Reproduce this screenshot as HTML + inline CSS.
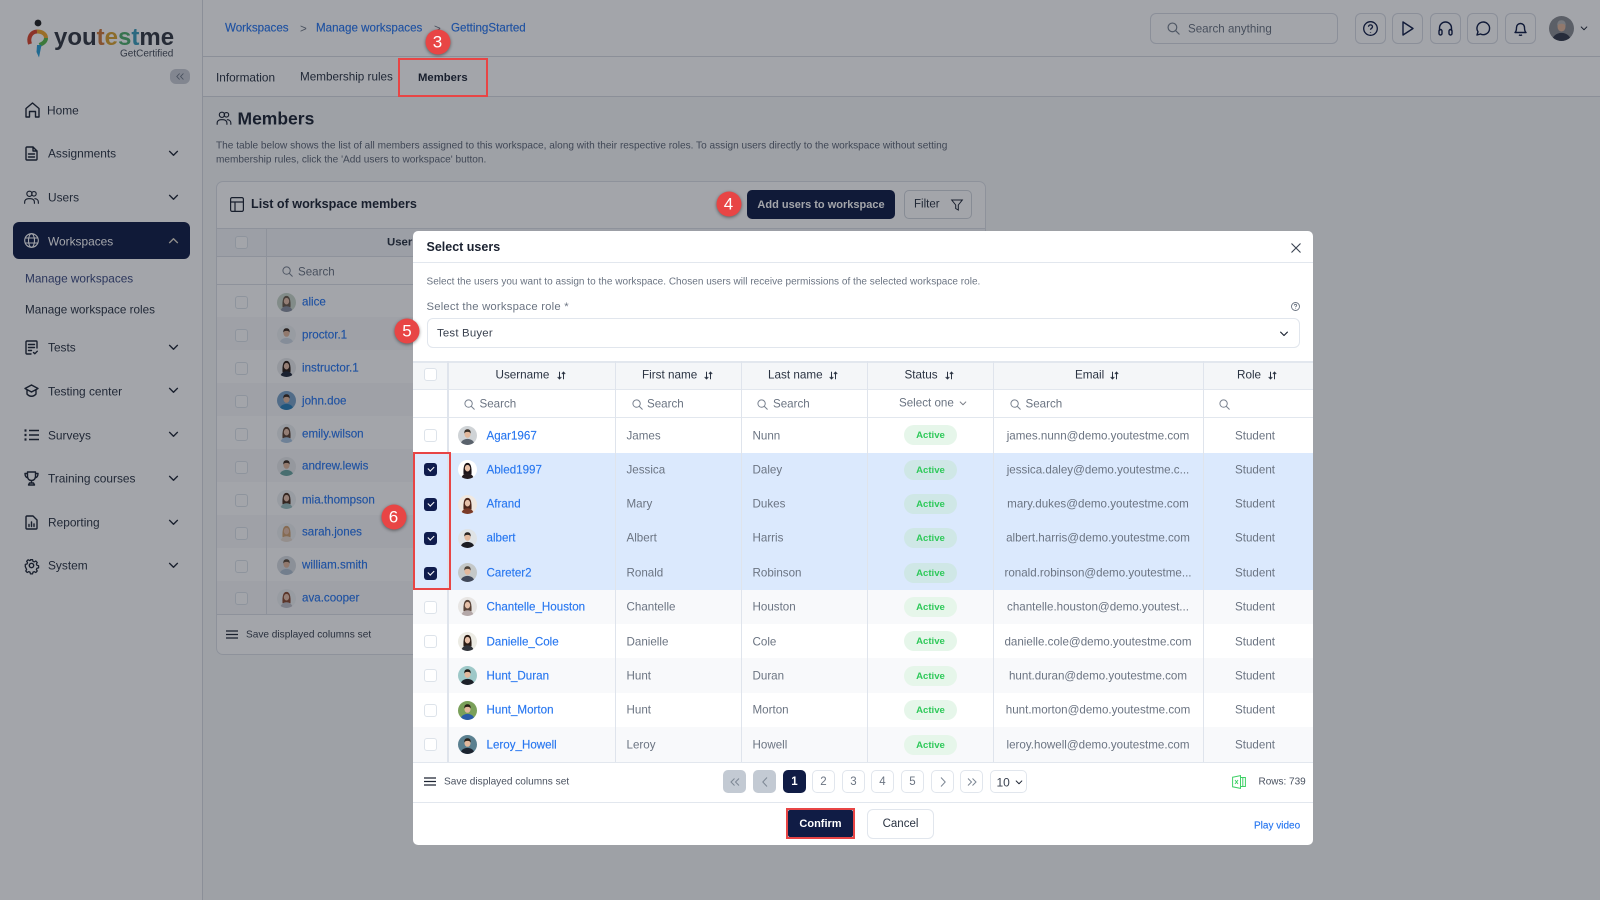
<!DOCTYPE html>
<html lang="en"><head><meta charset="utf-8"><title>Select users</title>
<style>
*{box-sizing:border-box}
html,body{margin:0;padding:0}
body{width:1600px;height:900px;overflow:hidden;position:relative;background:#f7f8f9;font-family:"Liberation Sans",sans-serif;color:#1d2433;font-size:11.6px}
.t{position:absolute;white-space:nowrap;transform:translateY(-46%);line-height:1.2}
.c{transform:translate(-50%,-46%)}
.a{position:absolute}
.l{color:#2877f0;-webkit-text-stroke:.15px #2877f0;font-size:11.6px}
.g{color:#6b7482;font-size:11.6px}
.n{color:#2a3342;font-size:11.9px}
svg{position:absolute;overflow:visible}
.ic{fill:none;stroke:#1d2433;stroke-width:1.4;stroke-linecap:round;stroke-linejoin:round}
.cb{position:absolute;width:13px;height:13px;border:1.3px solid #dde3ea;border-radius:3px;background:#fff}
.ck{position:absolute;width:13px;height:13px;border-radius:3px;background:#0f1c4d}
.ck:after{content:"";position:absolute;left:3.6px;top:2.6px;width:5.4px;height:3.2px;border-left:1.3px solid #fff;border-bottom:1.3px solid #fff;transform:rotate(-45deg)}
.tb{position:absolute;width:31px;height:31px;top:12.5px;border:1px solid #d8dce3;border-radius:6px}
.pg{position:absolute;top:770px;height:23px;width:23px;border:1.2px solid #e1e6ed;border-radius:5px;text-align:center;line-height:22.5px;color:#6b7482;font-size:11.5px;background:#fff}
.bd{position:absolute;left:904px;width:53px;height:20px;border-radius:10px;background:#e6f6ea;color:#2fc95a;font-weight:bold;font-size:9.6px;text-align:center;line-height:21px;transform:translateY(-50%)}
.bd.s{background:#cfe7e6}
.v{position:absolute;top:361px;height:401px;width:1px;background:#dfe4ec}
.h{position:absolute;left:413px;width:900px;height:1.5px;background:#e2e7ee}
.mk{position:absolute;width:25px;height:25px;border-radius:50%;background:#e84545;color:#fff;font-size:17px;text-align:center;line-height:25px;transform:translate(-50%,-50%);box-shadow:0 1px 3px rgba(0,0,0,.45)}
.rr{position:absolute;border:2px solid #e84545}
#ov{position:absolute;left:0;top:0;width:1600px;height:900px;background:rgba(19,24,35,.39)}
#m{position:absolute;left:413px;top:231px;width:900px;height:614px;background:#fff;border-radius:5px}
</style></head><body>
<svg width="0" height="0" style="position:absolute">
<defs>
<clipPath id="cp"><circle cx="10" cy="10" r="10"/></clipPath>
<symbol id="av" viewBox="0 0 20 20"><g clip-path="url(#cp)"><rect width="20" height="20" style="fill:var(--b)"/><ellipse cx="10" cy="20" rx="7.5" ry="6.5" style="fill:var(--c)"/><ellipse cx="10" cy="8.5" rx="3.2" ry="3.9" fill="#e2b89c"/><path d="M6.6 8C6.4 4.4 8 3.4 10 3.4S13.6 4.4 13.4 8C12.6 6.4 11 6.2 10 6.2S7.4 6.4 6.6 8z" style="fill:var(--h)"/></g></symbol>
<symbol id="aw" viewBox="0 0 20 20"><g clip-path="url(#cp)"><rect width="20" height="20" style="fill:var(--b)"/><path d="M5.8 15C5.4 7 6.6 3 10 3s4.6 4 4.2 12z" style="fill:var(--h)"/><ellipse cx="10" cy="20" rx="6.5" ry="6" style="fill:var(--c)"/><ellipse cx="10" cy="8.6" rx="2.8" ry="3.5" fill="#e6c0a8"/></g></symbol>
<symbol id="se" viewBox="0 0 12 12"><circle cx="5" cy="5" r="4" fill="none" stroke="#78818f" stroke-width="1.1"/><path d="M8 8l3.2 3.2" stroke="#78818f" stroke-width="1.1" stroke-linecap="round"/></symbol>
<symbol id="so" viewBox="0 0 9 9"><path d="M2.5 .8v7M.7 6l1.8 1.9L4.3 6M6.5 8.2v-7M4.9 3l1.6-1.9L8.2 3" fill="none" stroke="#2a3342" stroke-width="1"/></symbol>
<symbol id="ch" viewBox="0 0 12 8"><path d="M1.5 1.5L6 6l4.5-4.5" fill="none" stroke="#1d2433" stroke-width="1.6" stroke-linecap="round" stroke-linejoin="round"/></symbol>
<symbol id="us" viewBox="0 0 16 16"><circle cx="5.8" cy="4" r="2.8" fill="none" stroke="#1d2433" stroke-width="1.2"/><circle cx="10.6" cy="4" r="2.4" fill="none" stroke="#1d2433" stroke-width="1.2"/><path d="M.7 14.2v-1.4c0-2.2 1.8-3.6 4-3.6h2.4c2.2 0 4 1.4 4 3.6v1.4M11.6 9.3c2 .1 3.7 1.4 3.7 3.5v1.4" fill="none" stroke="#1d2433" stroke-width="1.2" stroke-linecap="round"/></symbol>
</defs></svg>

<!-- sidebar -->
<div class="a" style="left:0;top:0;width:203px;height:900px;background:#fff;border-right:1.5px solid #d8dce2"></div>
<svg style="left:27px;top:19px" width="22" height="40" viewBox="0 0 22 40" fill="none">
<circle cx="11" cy="4" r="3.4" fill="#222"/>
<path d="M3 25C1 19 3.500 13 10 12.500" stroke="#d9452b" stroke-width="4"/>
<path d="M10 12.500C15 12.400 19 15 19 19" stroke="#f0a52b" stroke-width="4"/>
<path d="M19 19C19 23 15 25 12.500 26" stroke="#57b84a" stroke-width="4"/>
<path d="M10 26h4.500L12 38.500 9.500 33z" fill="#2a9fd6"/>
</svg>
<div class="t" style="left:54px;top:37px;font-size:24px;font-weight:bold;color:#333842">you<span style="color:#cf7a3a">t</span><span style="color:#d9a32e">e</span><span style="color:#4fae6b">s</span><span style="color:#3b9dbb">t</span>me</div>
<div class="t" style="left:120px;top:53.500px;font-size:10px;color:#444b57">GetCertified</div>
<div class="a" style="left:170px;top:69px;width:20px;height:15px;background:#c9cdd5;border-radius:6px"></div>
<svg style="left:176px;top:73px" width="8" height="7" viewBox="0 0 8 7"><path d="M3.600 .5L.8 3.500l2.800 3M7.400 .5L4.600 3.500l2.800 3" fill="none" stroke="#6b7482" stroke-width=".9"/></svg>

<svg class="ic" style="left:25px;top:102px" width="15" height="16" viewBox="0 0 15 16"><path d="M1 6.500L7.500 1 14 6.500V15h-3.500V9.500h-6V15H1z"/></svg>
<div class="t n" style="left:47px;top:110px">Home</div>
<svg class="ic" style="left:25px;top:146px" width="13" height="15" viewBox="0 0 13 15"><path d="M1 2a1 1 0 0 1 1-1h6l4 4v8a1 1 0 0 1-1 1H2a1 1 0 0 1-1-1zM8 1v4h4M3.500 8h6M3.500 11h6"/></svg>
<div class="t n" style="left:48px;top:153px">Assignments</div>
<svg style="left:24px;top:190px" width="15" height="15"><use href="#us"/></svg>
<div class="t n" style="left:48px;top:197px">Users</div>
<div class="a" style="left:12.500px;top:222px;width:177px;height:37px;background:#101c45;border-radius:6px"></div>
<svg style="left:24px;top:233px" width="15" height="15" viewBox="0 0 15 15" fill="none" stroke="#fff" stroke-width="1.1"><circle cx="7.500" cy="7.500" r="6.800"/><ellipse cx="7.500" cy="7.500" rx="3" ry="6.800"/><path d="M1.200 5h12.600M1.200 10h12.600"/></svg>
<div class="t n" style="left:48px;top:241px;color:#fff">Workspaces</div>
<div class="t" style="left:25px;top:278px;color:#3c4a80;font-size:11.800px">Manage workspaces</div>
<div class="t n" style="left:25px;top:310px;font-size:11.700px">Manage workspace roles</div>
<svg class="ic" style="left:25px;top:340px" width="13" height="15" viewBox="0 0 13 15"><path d="M12 8V2a1 1 0 0 0-1-1H2a1 1 0 0 0-1 1v11a1 1 0 0 0 1 1h4M3.500 4.500h6M3.500 7.500h6M3.500 10.500h3M8.500 12.500l1.300 1.300 2.500-2.600"/></svg>
<div class="t n" style="left:48px;top:347px">Tests</div>
<svg class="ic" style="left:24px;top:384px" width="15" height="14" viewBox="0 0 15 14"><path d="M1 4.500L7.500 1 14 4.500 7.500 8zM3 6v4c2.500 3 6.500 3 9 0V6"/></svg>
<div class="t n" style="left:48px;top:391px">Testing center</div>
<svg style="left:24px;top:429px" width="15" height="12" viewBox="0 0 15 12" fill="none" stroke="#1d2433" stroke-width="1.4"><path d="M5 1.500h10M5 6h10M5 10.500h10"/><path d="M.5 1.500h2M.5 6h2M.5 10.500h2" stroke-width="2.200"/></svg>
<div class="t n" style="left:48px;top:435px">Surveys</div>
<svg class="ic" style="left:24px;top:471px" width="15" height="15" viewBox="0 0 15 15"><path d="M3.500 1h8v4.500c0 2.500-1.800 4-4 4s-4-1.500-4-4zM3.500 2.500H1c0 3 1 4 3 4.500M11.500 2.500H14c0 3-1 4-3 4.500M7.500 9.500V12M4.500 14h6l-1-2h-4z"/></svg>
<div class="t n" style="left:48px;top:478px">Training courses</div>
<svg class="ic" style="left:25px;top:515px" width="13" height="15" viewBox="0 0 13 15"><path d="M1 2a1 1 0 0 1 1-1h6l4 4v8a1 1 0 0 1-1 1H2a1 1 0 0 1-1-1zM4 11.500V9.500M6.500 11.500V7M9 11.500V9"/></svg>
<div class="t n" style="left:48px;top:522px">Reporting</div>
<svg class="ic" style="left:24px;top:558px" width="15" height="15" viewBox="0 0 15 15"><circle cx="7.500" cy="7.500" r="2.200"/><path d="M6.300 1h2.400l.4 1.800 1.500.7 1.600-1 1.700 1.700-1 1.600.7 1.500 1.800.4v2.400l-1.800.4-.7 1.500 1 1.600-1.700 1.700-1.600-1-1.500.7-.4 1.800H6.300l-.4-1.800-1.500-.7-1.600 1-1.700-1.700 1-1.600-.7-1.500L.6 8.700V6.300l1.800-.4.700-1.500-1-1.600 1.700-1.700 1.600 1 1.500-.7z" transform="translate(.75 .75) scale(.9)"/></svg>
<div class="t n" style="left:48px;top:565px">System</div>
<svg style="left:168px;top:150px" width="11" height="7"><use href="#ch"/></svg>
<svg style="left:168px;top:194px" width="11" height="7"><use href="#ch"/></svg>
<svg style="left:168px;top:237px;transform:rotate(180deg)" width="11" height="7"><use href="#ch" style="filter:invert(1)"/></svg>
<svg style="left:168px;top:344px" width="11" height="7"><use href="#ch"/></svg>
<svg style="left:168px;top:387px" width="11" height="7"><use href="#ch"/></svg>
<svg style="left:168px;top:431px" width="11" height="7"><use href="#ch"/></svg>
<svg style="left:168px;top:475px" width="11" height="7"><use href="#ch"/></svg>
<svg style="left:168px;top:519px" width="11" height="7"><use href="#ch"/></svg>
<svg style="left:168px;top:562px" width="11" height="7"><use href="#ch"/></svg>

<!-- top bar -->
<div class="a" style="left:203px;top:0;width:1397px;height:57px;background:#fff;border-bottom:1.5px solid #d8dce2"></div>
<div class="t l" style="left:225px;top:28px">Workspaces</div>
<div class="t g" style="left:300px;top:29px">&gt;</div>
<div class="t l" style="left:316px;top:28px">Manage workspaces</div>
<div class="t g" style="left:434px;top:29px">&gt;</div>
<div class="t l" style="left:451px;top:28px">GettingStarted</div>
<div class="a" style="left:1150px;top:12.500px;width:187.500px;height:31px;border:1px solid #d8dce3;border-radius:6px"></div>
<svg style="left:1167px;top:22px" width="13" height="13"><use href="#se"/></svg>
<div class="t g" style="left:1188px;top:28.500px">Search anything</div>
<div class="tb" style="left:1355px"></div><div class="tb" style="left:1392px"></div><div class="tb" style="left:1430px"></div><div class="tb" style="left:1467px"></div><div class="tb" style="left:1505px"></div>
<svg style="left:1363px;top:21px" width="15" height="15" viewBox="0 0 15 15" fill="none" stroke="#101c45" stroke-width="1.300"><circle cx="7.500" cy="7.500" r="6.800"/><path d="M5.500 5.800c0-2.600 4-2.600 4 0 0 1.500-2 1.500-2 3M7.500 11v.6"/></svg>
<svg style="left:1402px;top:21px" width="12" height="15" viewBox="0 0 12 15" fill="none" stroke="#101c45" stroke-width="1.400" stroke-linejoin="round"><path d="M1 1l10 6.500L1 14z"/></svg>
<svg style="left:1438px;top:21px" width="15" height="15" viewBox="0 0 15 15" fill="none" stroke="#101c45" stroke-width="1.400"><path d="M1.500 10V7a6 6 0 0 1 12 0v3"/><rect x="1" y="8.500" width="3" height="5.500" rx="1.500"/><rect x="11" y="8.500" width="3" height="5.500" rx="1.500"/></svg>
<svg style="left:1476px;top:21px" width="15" height="15" viewBox="0 0 15 15" fill="none" stroke="#101c45" stroke-width="1.400" stroke-linejoin="round"><path d="M1 14l1-3.200A6.300 6.300 0 1 1 4.500 13z"/></svg>
<svg style="left:1514px;top:21px" width="13" height="15" viewBox="0 0 13 15" fill="none" stroke="#101c45" stroke-width="1.400" stroke-linejoin="round"><path d="M1 11.500c1.200-1 1.500-2.500 1.500-5a4 4 0 0 1 8 0c0 2.500.3 4 1.500 5zM5 13.800c.8.600 2.200.6 3 0"/></svg>
<svg style="left:1548.500px;top:15.500px;--b:#8a8d92;--c:#333a4a;--h:#b8b8b8" width="25" height="25"><use href="#av"/></svg>
<svg style="left:1580px;top:26px" width="8" height="5"><use href="#ch"/></svg>

<!-- tabs -->
<div class="a" style="left:203px;top:57px;width:1397px;height:39.500px;background:#fff;border-bottom:1.5px solid #d8dce2"></div>
<div class="t n" style="left:216px;top:77px;font-size:11.800px">Information</div>
<div class="t n" style="left:300px;top:77px;font-size:11.700px">Membership rules</div>
<div class="t" style="left:418px;top:77.500px;font-weight:bold;font-size:11.300px">Members</div>

<!-- content -->
<svg style="left:216px;top:111px" width="16" height="15"><use href="#us"/></svg>
<div class="t" style="left:237.500px;top:117.500px;font-size:17.500px;font-weight:bold">Members</div>
<div class="t" style="left:216px;top:146px;font-size:10.100px;color:#5d6675">The table below shows the list of all members assigned to this workspace, along with their respective roles. To assign users directly to the workspace without setting</div>
<div class="t" style="left:216px;top:160px;font-size:10.100px;color:#5d6675">membership rules, click the 'Add users to workspace' button.</div>
<div class="a" style="left:216px;top:181px;width:770px;height:474px;background:#fff;border:1px solid #dde1e7;border-radius:7px"></div>
<svg style="left:230px;top:197px" width="14" height="15" viewBox="0 0 14 15" fill="none" stroke="#1d2433" stroke-width="1.200"><rect x=".6" y=".6" width="12.800" height="13.800" rx="1.500"/><path d="M.6 5h12.800M5 5v9.400"/></svg>
<div class="t" style="left:251px;top:204px;font-size:12.600px;font-weight:bold">List of workspace members</div>
<div class="a" style="left:747px;top:190px;width:148px;height:29px;background:#101c45;border-radius:5px;color:#fff;font-size:11px;font-weight:bold;text-align:center;line-height:30px">Add users to workspace</div>
<div class="a" style="left:904px;top:190px;width:68px;height:29px;border:1px solid #d2d6dd;border-radius:5px"></div>
<div class="t n" style="left:914px;top:205px;font-size:11.500px">Filter</div>
<svg style="left:951px;top:199px" width="12" height="12" viewBox="0 0 12 12" fill="none" stroke="#1d2433" stroke-width="1"><path d="M.7 1h10.600L7.300 6v5L4.700 9.500V6z"/></svg>
<div class="a" style="left:217px;top:228px;width:768px;height:29px;background:#f4f6f8;border-top:1px solid #dde1e7;border-bottom:1px solid #dde1e7"></div>
<div class="a" style="left:217px;top:283.500px;width:768px;height:1px;background:#dde1e7"></div>
<div class="a" style="left:217px;top:614px;width:768px;height:1px;background:#dde1e7"></div>
<div class="a" style="left:217px;top:317px;width:768px;height:33px;background:#f8f9fb"></div>
<div class="a" style="left:217px;top:383px;width:768px;height:33px;background:#f8f9fb"></div>
<div class="a" style="left:217px;top:449px;width:768px;height:33px;background:#f8f9fb"></div>
<div class="a" style="left:217px;top:515px;width:768px;height:33px;background:#f8f9fb"></div>
<div class="a" style="left:217px;top:581px;width:768px;height:33px;background:#f8f9fb"></div>
<div class="a" style="left:266px;top:228px;width:1px;height:386px;background:#dde1e7"></div>
<div class="t" style="left:387px;top:242.500px;font-weight:bold;font-size:11.400px;color:#2a3342">Username</div>
<div class="cb" style="left:235px;top:236px"></div>
<svg style="left:282px;top:266px" width="11" height="11"><use href="#se"/></svg>
<div class="t g" style="left:298px;top:271.500px">Search</div>
<div class="cb" style="left:235px;top:296px"></div>
<div class="cb" style="left:235px;top:329px"></div>
<div class="cb" style="left:235px;top:362px"></div>
<div class="cb" style="left:235px;top:395px"></div>
<div class="cb" style="left:235px;top:428px"></div>
<div class="cb" style="left:235px;top:461px"></div>
<div class="cb" style="left:235px;top:494px"></div>
<div class="cb" style="left:235px;top:527px"></div>
<div class="cb" style="left:235px;top:560px"></div>
<div class="cb" style="left:235px;top:592px"></div>
<svg style="left:277px;top:292.500px;--b:#c9d7c9;--c:#8a90a0;--h:#6a5a4a" width="19" height="19"><use href="#aw"/></svg>
<svg style="left:277px;top:325px;--b:#eef0f2;--c:#cfd8e4;--h:#3a2a20" width="19" height="19"><use href="#av"/></svg>
<svg style="left:277px;top:358px;--b:#e8eaec;--c:#222a3a;--h:#2a1c14" width="19" height="19"><use href="#aw"/></svg>
<svg style="left:277px;top:391px;--b:#7aa2c8;--c:#2a7fb8;--h:#3a2a20" width="19" height="19"><use href="#av"/></svg>
<svg style="left:277px;top:424px;--b:#eef0f2;--c:#a8c4e0;--h:#5a4030" width="19" height="19"><use href="#aw"/></svg>
<svg style="left:277px;top:457px;--b:#e8eaec;--c:#6aa6a0;--h:#3a2a20" width="19" height="19"><use href="#av"/></svg>
<svg style="left:277px;top:490px;--b:#eef0f2;--c:#9ac0c0;--h:#4a3020" width="19" height="19"><use href="#aw"/></svg>
<svg style="left:277px;top:523px;--b:#eef0f2;--c:#e8dcd0;--h:#d0a070" width="19" height="19"><use href="#aw"/></svg>
<svg style="left:277px;top:556px;--b:#d8dde2;--c:#b0c0d0;--h:#5a4a3a" width="19" height="19"><use href="#av"/></svg>
<svg style="left:277px;top:589px;--b:#eef0f2;--c:#c0c0c8;--h:#8a4a30" width="19" height="19"><use href="#aw"/></svg>
<div class="t l" style="left:302px;top:302px">alice</div>
<div class="t l" style="left:302px;top:334.500px">proctor.1</div>
<div class="t l" style="left:302px;top:367.500px">instructor.1</div>
<div class="t l" style="left:302px;top:400.500px">john.doe</div>
<div class="t l" style="left:302px;top:433.500px">emily.wilson</div>
<div class="t l" style="left:302px;top:466px">andrew.lewis</div>
<div class="t l" style="left:302px;top:499.500px">mia.thompson</div>
<div class="t l" style="left:302px;top:532px">sarah.jones</div>
<div class="t l" style="left:302px;top:565px">william.smith</div>
<div class="t l" style="left:302px;top:598px">ava.cooper</div>
<svg style="left:226px;top:630px" width="12" height="9" viewBox="0 0 12 9" stroke="#1d2433" stroke-width="1.200"><path d="M0 1h12M0 4.500h12M0 8h12"/></svg>
<div class="t" style="left:246px;top:635px;font-size:10.100px;color:#3a4250">Save displayed columns set</div>

<div id="ov"></div>

<!-- modal -->
<div id="m"></div>
<div class="t" style="left:426.500px;top:246.500px;font-size:12.500px;font-weight:bold;color:#1a2130">Select users</div>
<svg style="left:1291px;top:243px" width="10" height="10" viewBox="0 0 10 10" stroke="#3a4250" stroke-width="1.100"><path d="M.5.5l9 9M9.500.5l-9 9"/></svg>
<div class="h" style="top:261.500px"></div>
<div class="t g" style="left:426.500px;top:282px;font-size:10px;letter-spacing:.02px">Select the users you want to assign to the workspace. Chosen users will receive permissions of the selected workspace role.</div>
<div class="t g" style="left:426.500px;top:307px;font-size:11.300px;letter-spacing:.2px">Select the workspace role *</div>
<svg style="left:1290.500px;top:302px" width="9" height="9" viewBox="0 0 9 9" fill="none" stroke="#6b7482" stroke-width=".9"><circle cx="4.500" cy="4.500" r="4"/><path d="M3.300 3.500c0-1.500 2.400-1.500 2.400 0 0 .9-1.200.9-1.200 1.800M4.500 6.300v.4"/></svg>
<div class="a" style="left:427px;top:318px;width:873px;height:30px;border:1.300px solid #e1e6ed;border-radius:6px"></div>
<div class="t" style="left:437px;top:334px;font-size:11.400px;color:#3a4250;letter-spacing:.2px">Test Buyer</div>
<svg style="left:1279px;top:331px" width="10" height="6"><use href="#ch"/></svg>

<!-- table bg -->
<div class="a" style="left:413px;top:361px;width:900px;height:28px;background:#f4f6f8"></div>
<div class="a" style="left:413px;top:453px;width:900px;height:136.500px;background:#dbe9fd"></div>
<div class="a" style="left:413px;top:589.500px;width:900px;height:34px;background:#f8f9fb"></div>
<div class="a" style="left:413px;top:658px;width:900px;height:34.500px;background:#f8f9fb"></div>
<div class="a" style="left:413px;top:727px;width:900px;height:35px;background:#f8f9fb"></div>
<div class="h" style="top:361px"></div><div class="h" style="top:388.500px"></div><div class="h" style="top:416.500px"></div><div class="h" style="top:761.500px"></div><div class="h" style="top:801.500px"></div>
<div class="v" style="left:447px;width:2px"></div><div class="v" style="left:615px"></div><div class="v" style="left:741px"></div><div class="v" style="left:867px"></div><div class="v" style="left:993px"></div><div class="v" style="left:1203px"></div>

<!-- header -->
<div class="cb" style="left:424px;top:368px"></div>
<div class="t n" style="left:495.500px;top:375px;font-size:11.700px">Username</div>
<div class="t n" style="left:642px;top:375px;font-size:11.700px">First name</div>
<div class="t n" style="left:768px;top:375px;font-size:11.700px">Last name</div>
<div class="t n" style="left:904.500px;top:375px;font-size:11.700px">Status</div>
<div class="t n" style="left:1075px;top:375px;font-size:11.700px">Email</div>
<div class="t n" style="left:1237px;top:375px;font-size:11.700px">Role</div>
<svg style="left:557px;top:371px" width="9" height="9"><use href="#so"/></svg>
<svg style="left:704px;top:371px" width="9" height="9"><use href="#so"/></svg>
<svg style="left:829px;top:371px" width="9" height="9"><use href="#so"/></svg>
<svg style="left:945px;top:371px" width="9" height="9"><use href="#so"/></svg>
<svg style="left:1110px;top:371px" width="9" height="9"><use href="#so"/></svg>
<svg style="left:1268px;top:371px" width="9" height="9"><use href="#so"/></svg>
<!-- filter -->
<svg style="left:464px;top:398.500px" width="11" height="11"><use href="#se"/></svg><div class="t g" style="left:479.500px;top:404px">Search</div>
<svg style="left:631.500px;top:398.500px" width="11" height="11"><use href="#se"/></svg><div class="t g" style="left:647px;top:404px">Search</div>
<svg style="left:757px;top:398.500px" width="11" height="11"><use href="#se"/></svg><div class="t g" style="left:773px;top:404px">Search</div>
<div class="t g" style="left:899px;top:403px">Select one</div>
<svg style="left:959px;top:401px;opacity:.6" width="8" height="5"><use href="#ch"/></svg>
<svg style="left:1010px;top:398.500px" width="11" height="11"><use href="#se"/></svg><div class="t g" style="left:1025.500px;top:404px">Search</div>
<svg style="left:1219px;top:398.500px" width="11" height="11"><use href="#se"/></svg>

<!-- rows -->
<div class="cb" style="left:424px;top:429px"></div>
<svg style="left:458px;top:425.500px;--b:#cfd3d6;--c:#5a626c;--h:#3a3028" width="19" height="19"><use href="#av"/></svg>
<div class="t l" style="left:486.500px;top:435.500px">Agar1967</div><div class="t g" style="left:626.500px;top:435.500px">James</div><div class="t g" style="left:752.500px;top:435.500px">Nunn</div><div class="bd" style="top:435px">Active</div><div class="t g c" style="left:1098px;top:435.500px">james.nunn@demo.youtestme.com</div><div class="t g c" style="left:1255px;top:435.500px">Student</div>

<div class="ck" style="left:424px;top:463px"></div>
<svg style="left:458px;top:460px;--b:#ffffff;--c:#241c20;--h:#1c1418" width="19" height="19"><use href="#aw"/></svg>
<div class="t l" style="left:486.500px;top:469.500px">Abled1997</div><div class="t g" style="left:626.500px;top:469.500px">Jessica</div><div class="t g" style="left:752.500px;top:469.500px">Daley</div><div class="bd s" style="top:469.500px">Active</div><div class="t g c" style="left:1098px;top:469.500px">jessica.daley@demo.youtestme.c...</div><div class="t g c" style="left:1255px;top:469.500px">Student</div>

<div class="ck" style="left:424px;top:498px"></div>
<svg style="left:458px;top:494.500px;--b:#f0e8e0;--c:#7a3a28;--h:#4a2418" width="19" height="19"><use href="#aw"/></svg>
<div class="t l" style="left:486.500px;top:504px">Afrand</div><div class="t g" style="left:626.500px;top:503.500px">Mary</div><div class="t g" style="left:752.500px;top:503.500px">Dukes</div><div class="bd s" style="top:503.500px">Active</div><div class="t g c" style="left:1098px;top:503.500px">mary.dukes@demo.youtestme.com</div><div class="t g c" style="left:1255px;top:503.500px">Student</div>

<div class="ck" style="left:424px;top:532px"></div>
<svg style="left:458px;top:528.500px;--b:#dfe3e6;--c:#1c1c22;--h:#2a2420" width="19" height="19"><use href="#av"/></svg>
<div class="t l" style="left:486.500px;top:538px">albert</div><div class="t g" style="left:626.500px;top:538px">Albert</div><div class="t g" style="left:752.500px;top:538px">Harris</div><div class="bd s" style="top:538px">Active</div><div class="t g c" style="left:1098px;top:538px">albert.harris@demo.youtestme.com</div><div class="t g c" style="left:1255px;top:538px">Student</div>

<div class="ck" style="left:424px;top:567px"></div>
<svg style="left:458px;top:563px;--b:#c4c8c8;--c:#40485a;--h:#4a4038" width="19" height="19"><use href="#av"/></svg>
<div class="t l" style="left:486.500px;top:572.500px">Careter2</div><div class="t g" style="left:626.500px;top:572.500px">Ronald</div><div class="t g" style="left:752.500px;top:572.500px">Robinson</div><div class="bd s" style="top:572.500px">Active</div><div class="t g c" style="left:1098px;top:572.500px">ronald.robinson@demo.youtestme...</div><div class="t g c" style="left:1255px;top:572.500px">Student</div>

<div class="cb" style="left:424px;top:600.500px"></div>
<svg style="left:458px;top:597px;--b:#e8e6e4;--c:#b4a8a8;--h:#5a4438" width="19" height="19"><use href="#aw"/></svg>
<div class="t l" style="left:486.500px;top:607px">Chantelle_Houston</div><div class="t g" style="left:626.500px;top:607px">Chantelle</div><div class="t g" style="left:752.500px;top:607px">Houston</div><div class="bd" style="top:607px">Active</div><div class="t g c" style="left:1098px;top:607px">chantelle.houston@demo.youtest...</div><div class="t g c" style="left:1255px;top:607px">Student</div>

<div class="cb" style="left:424px;top:635px"></div>
<svg style="left:458px;top:631.500px;--b:#ecebe4;--c:#30343a;--h:#2a1c14" width="19" height="19"><use href="#aw"/></svg>
<div class="t l" style="left:486.500px;top:641.500px">Danielle_Cole</div><div class="t g" style="left:626.500px;top:641.500px">Danielle</div><div class="t g" style="left:752.500px;top:641.500px">Cole</div><div class="bd" style="top:641px">Active</div><div class="t g c" style="left:1098px;top:641.500px">danielle.cole@demo.youtestme.com</div><div class="t g c" style="left:1255px;top:641.500px">Student</div>

<div class="cb" style="left:424px;top:669px"></div>
<svg style="left:458px;top:666px;--b:#9dc8c8;--c:#1c2028;--h:#1c1814" width="19" height="19"><use href="#av"/></svg>
<div class="t l" style="left:486.500px;top:675.500px">Hunt_Duran</div><div class="t g" style="left:626.500px;top:675.500px">Hunt</div><div class="t g" style="left:752.500px;top:675.500px">Duran</div><div class="bd" style="top:675.500px">Active</div><div class="t g c" style="left:1098px;top:675.500px">hunt.duran@demo.youtestme.com</div><div class="t g c" style="left:1255px;top:675.500px">Student</div>

<div class="cb" style="left:424px;top:704px"></div>
<svg style="left:458px;top:700.500px;--b:#7aa05a;--c:#2a5ca8;--h:#2a2018" width="19" height="19"><use href="#av"/></svg>
<div class="t l" style="left:486.500px;top:710px">Hunt_Morton</div><div class="t g" style="left:626.500px;top:710px">Hunt</div><div class="t g" style="left:752.500px;top:710px">Morton</div><div class="bd" style="top:710px">Active</div><div class="t g c" style="left:1098px;top:710px">hunt.morton@demo.youtestme.com</div><div class="t g c" style="left:1255px;top:710px">Student</div>

<div class="cb" style="left:424px;top:738px"></div>
<svg style="left:458px;top:735px;--b:#5a8090;--c:#1c2430;--h:#2a2018" width="19" height="19"><use href="#av"/></svg>
<div class="t l" style="left:486.500px;top:744.500px">Leroy_Howell</div><div class="t g" style="left:626.500px;top:744.500px">Leroy</div><div class="t g" style="left:752.500px;top:744.500px">Howell</div><div class="bd" style="top:744.500px">Active</div><div class="t g c" style="left:1098px;top:744.500px">leroy.howell@demo.youtestme.com</div><div class="t g c" style="left:1255px;top:744.500px">Student</div>

<!-- footer -->
<svg style="left:423.500px;top:777px" width="12" height="9" viewBox="0 0 12 9" stroke="#1d2433" stroke-width="1.200"><path d="M0 1h12M0 4.500h12M0 8h12"/></svg>
<div class="t" style="left:444px;top:782px;font-size:10.100px;color:#4a5260">Save displayed columns set</div>
<div class="pg" style="left:723px;background:#c3cad3;border-color:#c3cad3"></div>
<svg style="left:729.500px;top:777.500px" width="10" height="8" viewBox="0 0 10 8" fill="none" stroke="#7d8794"><path d="M4.500.5L1 4l3.500 3.500M9 .5L5.500 4 9 7.500"/></svg>
<div class="pg" style="left:753px;background:#c3cad3;border-color:#c3cad3"></div>
<svg style="left:761.500px;top:776.500px" width="6" height="10" viewBox="0 0 6 10" fill="none" stroke="#7d8794"><path d="M5 .5L.8 5 5 9.500"/></svg>
<div class="pg" style="left:783px;background:#101c45;border-color:#101c45;color:#fff;font-weight:bold">1</div>
<div class="pg" style="left:812px">2</div><div class="pg" style="left:842px">3</div><div class="pg" style="left:871px">4</div><div class="pg" style="left:901px">5</div>
<div class="pg" style="left:931px"></div>
<svg style="left:939.500px;top:776.500px" width="6" height="10" viewBox="0 0 6 10" fill="none" stroke="#7d8794"><path d="M1 .5L5.200 5 1 9.500"/></svg>
<div class="pg" style="left:960px"></div>
<svg style="left:967px;top:777.500px" width="10" height="8" viewBox="0 0 10 8" fill="none" stroke="#7d8794"><path d="M1 .5L4.500 4 1 7.500M5.500 .5L9 4 5.500 7.500"/></svg>
<div class="a" style="left:990px;top:770px;width:37px;height:23px;border:1.200px solid #e1e6ed;border-radius:5px"></div>
<div class="t" style="left:996.500px;top:782px;font-size:12px;color:#3a4250">10</div>
<svg style="left:1014.500px;top:779.500px" width="8" height="5"><use href="#ch"/></svg>
<svg style="left:1231.500px;top:775px" width="14" height="14" viewBox="0 0 14 14" fill="none" stroke="#3fd066" stroke-width="1"><path d="M.6 2.200L8.500.6v12.800L.6 11.800zM8.500 2.500h4.900v9H8.500M10.800 2.500v9M3 5l3 4M6 5L3 9" /></svg>
<div class="t" style="left:1258.500px;top:782px;font-size:10px;color:#4a5260">Rows: 739</div>
<div class="a" style="left:788px;top:810px;width:65px;height:27px;background:#101c45;border-radius:2px;color:#fff;font-weight:bold;font-size:11px;text-align:center;line-height:28px">Confirm</div>
<div class="a" style="left:867px;top:809px;width:67px;height:30px;border:1.200px solid #e1e6ed;border-radius:6px;font-size:11.500px;color:#2a3342;text-align:center;line-height:28px">Cancel</div>
<div class="t" style="left:1254px;top:825.500px;font-size:10px;color:#2877f0;-webkit-text-stroke:.15px #2877f0">Play video</div>

<!-- annotations -->
<div class="rr" style="left:398px;top:57.500px;width:90px;height:39px"></div>
<div class="rr" style="left:412.500px;top:452px;width:38.500px;height:138px"></div>
<div class="rr" style="left:786px;top:808px;width:69px;height:31px"></div>
<div class="mk" style="left:437.500px;top:41.500px">3</div>
<div class="mk" style="left:728.500px;top:204px">4</div>
<div class="mk" style="left:407px;top:331px">5</div>
<div class="mk" style="left:393.500px;top:517px">6</div>
</body></html>
